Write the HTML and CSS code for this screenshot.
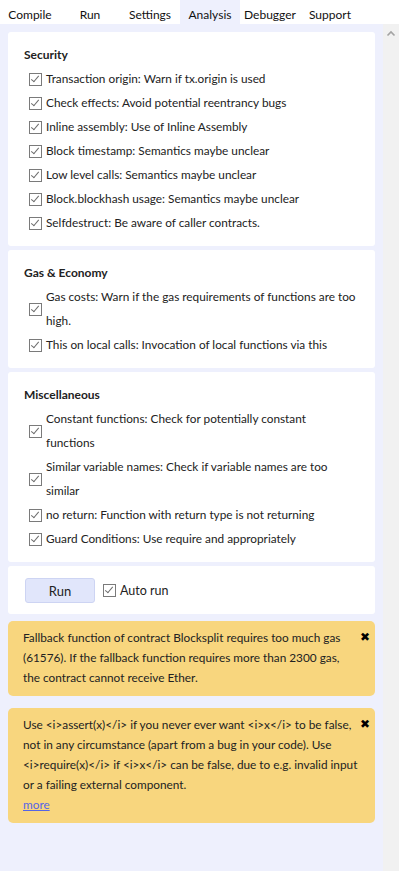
FILE: index.html
```html
<!DOCTYPE html>
<html lang="en">

<head>
    <meta charset="UTF-8">
    <meta name="viewport" content="width=device-width, initial-scale=1.0">
    <title>Analysis</title>
    <link rel="stylesheet" href="styles.css">
</head>

<body>
    <ul class="tabs">
        <li>Compile</li>
        <li>Run</li>
        <li>Settings</li>
        <li class="active">Analysis</li>
        <li>Debugger</li>
        <li>Support</li>
    </ul>

    <div class="main">
        <div class="panel">
            <div class="card">
                <h3>Security</h3>
                <label class="row"><input type="checkbox" checked><span>Transaction origin: Warn if tx.origin is used</span></label>
                <label class="row"><input type="checkbox" checked><span>Check effects: Avoid potential reentrancy bugs</span></label>
                <label class="row"><input type="checkbox" checked><span>Inline assembly: Use of Inline Assembly</span></label>
                <label class="row"><input type="checkbox" checked><span>Block timestamp: Semantics maybe unclear</span></label>
                <label class="row"><input type="checkbox" checked><span>Low level calls: Semantics maybe unclear</span></label>
                <label class="row"><input type="checkbox" checked><span>Block.blockhash usage: Semantics maybe unclear</span></label>
                <label class="row"><input type="checkbox" checked><span>Selfdestruct: Be aware of caller contracts.</span></label>
            </div>

            <div class="card">
                <h3>Gas &amp; Economy</h3>
                <label class="row"><input type="checkbox" checked><span>Gas costs: Warn if the gas requirements of functions are too high.</span></label>
                <label class="row"><input type="checkbox" checked><span>This on local calls: Invocation of local functions via this</span></label>
            </div>

            <div class="card">
                <h3>Miscellaneous</h3>
                <label class="row"><input type="checkbox" checked><span>Constant functions: Check for potentially constant functions</span></label>
                <label class="row"><input type="checkbox" checked><span>Similar variable names: Check if variable names are too similar</span></label>
                <label class="row"><input type="checkbox" checked><span>no return: Function with return type is not returning</span></label>
                <label class="row"><input type="checkbox" checked><span>Guard Conditions: Use require and appropriately</span></label>
            </div>

            <div class="card run-card">
                <button class="run-button">Run</button>
                <label class="auto-run"><input type="checkbox" checked><span>Auto run</span></label>
            </div>

            <div class="warning">
                <span class="close">&#10006;</span>
                <p>Fallback function of contract Blocksplit requires too much gas (61576). If the fallback function requires more than 2300 gas, the contract cannot receive Ether.</p>
            </div>

            <div class="warning second">
                <span class="close">&#10006;</span>
                <p>Use &lt;i&gt;assert(x)&lt;/i&gt; if you never ever want &lt;i&gt;x&lt;/i&gt; to be false, not in any circumstance (apart from a bug in your code). Use &lt;i&gt;require(x)&lt;/i&gt; if &lt;i&gt;x&lt;/i&gt; can be false, due to e.g. invalid input or a failing external component.</p>
                <a href="#" class="more">more</a>
            </div>
        </div>

        <div class="scrollbar">
            <svg width="16" height="16" viewBox="0 0 16 16">
                <path d="M4.5 9.5 L8 6 L11.5 9.5" fill="none" stroke="#a3a3a3" stroke-width="1.6"/>
            </svg>
        </div>
    </div>
</body>

</html>
```

FILE: styles.css
```css
/* Global settings */
*, *::before, *::after {
    box-sizing: border-box;
}

html,
body {
    margin: 0;
    padding: 0;
    height: 100%;
    font-family: Lato, "Liberation Sans", sans-serif;
    color: #222;
    background-color: #fff;
}

body {
    display: flex;
    flex-direction: column;
}

/* Tabs */
.tabs {
    display: flex;
    margin: 0;
    padding: 0;
    list-style: none;
    height: 24px;
    background-color: #fff;
}

.tabs li {
    width: 60px;
    padding-top: 6px;
    text-align: center;
    font-size: 12px;
    line-height: 18px;
    color: #111;
}

.tabs li.active {
    background-color: #eef0fd;
}

/* Main area */
.main {
    flex: 1;
    display: flex;
}

.panel {
    flex: 1;
    padding: 8px 8px 0 8px;
    background-color: #eef0fd;
}

.scrollbar {
    width: 16px;
    background-color: #f1f1f1;
    padding-top: 2px;
}

.scrollbar svg {
    display: block;
}

.card {
    background-color: #fff;
    border-radius: 3px;
    padding: 10px 19px 11px 16px;
    margin-bottom: 4px;
}

.card h3 {
    margin: 0;
    font-size: 12px;
    font-weight: bold;
    line-height: 25px;
}

.row {
    display: flex;
    align-items: center;
    padding-left: 1px;
    font-size: 11.8px;
    line-height: 24px;
}

input[type="checkbox"] {
    appearance: none;
    -webkit-appearance: none;
    position: relative;
    flex: none;
    width: 13px;
    height: 13px;
    margin: 0 4px 0 4px;
    border: 1px solid #7a7a7a;
    background-color: #fff;
}

input[type="checkbox"]:checked::after {
    content: "";
    position: absolute;
    left: 3px;
    top: 0px;
    width: 4px;
    height: 8px;
    border: solid #6d6d6d;
    border-width: 0 1.5px 1.5px 0;
    transform: rotate(40deg);
}

/* Run */
.run-card {
    display: flex;
    align-items: center;
    padding: 12px 17px 11px;
    margin-bottom: 7px;
}

.run-button {
    width: 70px;
    height: 25px;
    font-family: inherit;
    font-size: 13px;
    color: #222;
    background-color: #e1e6fb;
    border: 1px solid #cdd4f3;
    border-radius: 3px;
    margin-right: 4px;
}

.auto-run {
    display: flex;
    align-items: center;
    font-size: 12.5px;
}

/* Warnings */
.warning {
    background-color: #f8d67e;
    border-radius: 5px;
    padding: 7px 5px 8px 15px;
    font-size: 11.8px;
    line-height: 20px;
}

.warning.second {
    margin-top: 12px;
}

.warning p {
    margin: 0;
    padding-right: 11px;
}

.close {
    float: right;
    margin-top: -1px;
    font-size: 12px;
    color: #000;
}

.more {
    display: block;
    color: #5565e5;
}
```
